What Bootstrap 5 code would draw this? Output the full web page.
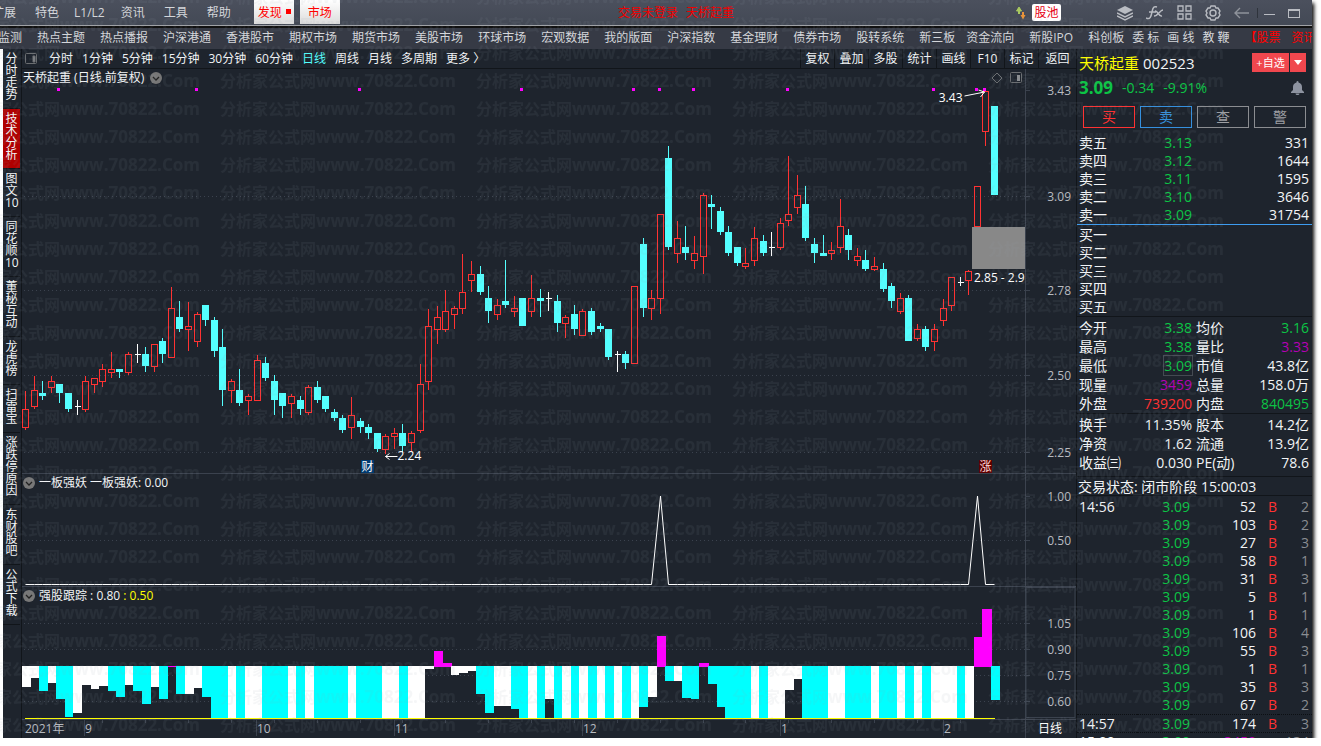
<!DOCTYPE html>
<html lang="zh-CN">
<head>
<meta charset="utf-8">
<meta name="viewport" content="width=device-width, initial-scale=1">
<title>天桥起重 002523</title>
<link href="https://cdn.jsdelivr.net/npm/bootstrap@5.3.0/dist/css/bootstrap.min.css" rel="stylesheet">
<style>
:root{--bg:#1e242d;--line:#11151a;--grid:#3b424e;--up:#ff3232;--down:#54ffff;--green:#0cc445;--mag:#b400b4;--txt:#f2f4f6}
body{font-family:"Open Sans","Noto Sans CJK SC",sans-serif;font-size:12px;line-height:18px;background:#fff;color:var(--txt);overflow:hidden}
button{font:inherit;color:inherit;background:none;border:0;padding:0;white-space:nowrap}
a{color:inherit;text-decoration:none;white-space:nowrap}
.app-win{height:calc(100vh - 8px);margin-right:9px;box-shadow:2px 3px 4px #000}
.menu-bar{height:28px;background:linear-gradient(#4b505d,#434955);border-bottom:2px solid #111;color:#d4d6da;overflow:hidden;box-shadow:inset 0 -1px #a0a2a6}
.menu-left{gap:19px;margin-left:-8px;width:348px}
.menu-left a{padding-top:2px}
.menu-left .lv{margin:0 -3px 0 -4px}
.tab-light{width:40px;height:24px;padding-top:1px;background:linear-gradient(#fff,#dcdcdc);color:#f00;position:relative}
.tab-dot{position:absolute;right:3px;top:9px;width:5px;height:5px;background:#f00}
.notice{color:#f00000}
.pool{background:#fff;color:#e60012;border-radius:2px;width:29px;height:17px;line-height:17px}
.nav-strip{height:21px;padding-bottom:2px;background:#363a45;color:#d4d6da;gap:15px;overflow:hidden}
.nav-strip .set-b{gap:11px}
.nav-first{margin-left:-2px}
.hot{color:#f00}
.work{border-left:3px solid #fff;background:var(--bg);min-height:0}
.side-tabs{width:19px;border-right:1px solid var(--line)}
.side-tabs button{display:block;width:17px;padding:4px 2px 7px;line-height:12px;font-size:12px;border-bottom:1px solid var(--line);white-space:normal;text-align:center}
.side-tabs button.on{background:#b00000}
.period{height:20px;border-bottom:1px solid var(--line)}
.period-list{gap:9px;margin-left:3px}
.period-list .on{color:var(--down)}
.tool-list button{width:34px;height:19px;border-left:1px solid var(--line)}
.tool-list button:last-child{width:38px}
.pane{position:relative;min-height:0;border-bottom:1px solid var(--grid);overflow:hidden}
.pane svg.plot{display:block;width:100%;height:100%}
.pane-a{flex:406 1 0}.pane-b{flex:112 1 0}.pane-c{flex:133 1 0}
.pane-head{position:absolute;left:1px;top:0;gap:4px}
.time-axis{height:18px}
.time-axis svg{display:block;width:100%;height:100%}
svg text{font-family:"Open Sans","Noto Sans CJK SC",sans-serif;font-size:12px}
.quote{width:236px;border-left:1px solid var(--line);overflow:hidden;font-size:14px}
.name-row{height:27px;padding:0 6px 0 2px;font-size:15px}
.name-row h1{font-size:15px;line-height:20px;color:#ff0;margin:0;font-weight:400}
.add-btn{background:#f0474e;color:#fff;font-size:11px;height:19px;width:37px}
.caret-btn{background:#f0474e;height:19px;width:16px;margin-left:1px}
.price-row{height:24px;padding:0 8px 0 2px;color:var(--green);gap:9px}
.price-row strong{font-size:17px}
.trade-row{height:34px;padding:6px 6px 6px 6px;gap:5px}
.trade-row button{flex:1;height:22px;border:1px solid #8b8d91;color:#9c9ea2;line-height:18px}
.trade-row .buy{border-color:var(--up);color:var(--up)}
.trade-row .sell{border-color:#3590de;color:#3590de}
.q-table{width:100%;table-layout:fixed;line-height:18px}
.q-table td,.q-table th{padding:0;font-weight:400;white-space:nowrap;height:18px}
.q-table th{padding-left:2px;text-align:left}
.q-table td{text-align:right;padding-right:1px}
.q-table td:last-child{padding-right:3px}
.stat td,.stat th{height:19px}
.stat td:first-of-type{padding-right:2px}
.asks{border-bottom:1px solid #3d9cf0;margin-bottom:1px}
.rule{border-top:1px solid var(--line);padding-top:1px}
.state{border-top:1px solid var(--line);border-bottom:1px solid var(--line);height:20px;margin-top:4px;padding-left:1px;line-height:19px}
.ticks{padding-top:2px}
.ticks .sep td,.ticks .sep th{border-top:1px dotted #0c0f13;height:17px;line-height:17px}
.g{color:var(--green)}.r{color:var(--up)}.m{color:var(--mag)}.dim{color:#8a8d92}
.boxed{outline:1px solid #444a52}
.wmark{position:absolute;left:0;top:0;width:calc(100% - 72px);height:100%;pointer-events:none}
</style>
</head>
<body>
<div class="app-win d-flex flex-column position-relative">
  <header class="menu-bar d-flex align-items-start flex-shrink-0">
    <nav class="menu-left d-flex align-items-center flex-shrink-0">
      <a href="#">扩展</a><a href="#">特色</a><a href="#" class="lv">L1/L2</a><a href="#">资讯</a><a href="#">工具</a><a href="#">帮助</a>
      <div class="d-flex ms-1" style="gap:6px"><button class="tab-light text-start ps-1">发现<span class="tab-dot"></span></button><button class="tab-light">市场</button></div>
    </nav>
    <div class="notice flex-grow-1 d-flex justify-content-center gap-2 pt-1"><span>交易未登录</span><span>天桥起重</span></div>
    <div class="d-flex align-items-center pt-1" style="width:300px">
      <svg width="16" height="17" viewBox="0 0 16 17"><path d="M7 4v5M7 3L4.500 7h5z" stroke="#a8c860" stroke-width="1" fill="#a8c860"/><path d="M6 7h2v3H6z" fill="#a8c860"/><path d="M10 8h2v4h-2zM8.500 11h5L11 15.500z" fill="#e8943a"/></svg>
      <button class="pool ms-1">股池</button>
      <div class="ms-auto d-flex align-items-center" style="gap:13px">
        <svg width="16" height="16" viewBox="0 0 16 16" fill="#b9bcc2"><path d="M8 1l8 4-8 4-8-4z"/><path d="M0 8l8 4 8-4M0 11l8 4 8-4" fill="none" stroke="#b9bcc2" stroke-width="1.4"/></svg>
        <svg width="18" height="16" viewBox="0 0 18 16" fill="none" stroke="#b9bcc2" stroke-width="1.5"><path d="M0 13c4 2 5-1 6-6s2-6 5-5M3 7h7M9 6c3-1 3 6 7 5M17 5c-3 0-5 6-9 6"/></svg>
        <svg width="15" height="15" viewBox="0 0 15 15" fill="none" stroke="#b9bcc2" stroke-width="1.3"><path d="M1 1h5v5H1zM9 1h5v5H9zM1 9h5v5H1zM9 9h5v5H9z"/></svg>
        <svg width="16" height="16" viewBox="0 0 16 16" fill="none" stroke="#b9bcc2" stroke-width="1.4"><path d="M6 1h4l1 2 2 0 2 3-1 2 1 2-2 3-2 0-1 2H6l-1-2-2 0-2-3 1-2-1-2 2-3 2 0z"/><circle cx="8" cy="8" r="3"/></svg>
        <svg width="15" height="14" viewBox="0 0 15 14" fill="none" stroke="#8f939b" stroke-width="1.4"><path d="M15 7H1M6 2L1 7l5 5"/></svg>
      </div>
      <svg class="ms-2 me-2" width="47" height="14" viewBox="0 0 47 14" fill="none" stroke="#b9bcc2" shape-rendering="crispEdges"><path d="M0.5 2v10" stroke="#2f343c"/><path d="M7 8.500h11M31.500 3.500h11v8h-11zM31 4.500h12"/></svg>
    </div>
  </header>
  <nav class="nav-strip d-flex align-items-center flex-shrink-0" id="strip"></nav>

  <div class="work d-flex flex-grow-1">
    <aside class="side-tabs flex-shrink-0" id="side"></aside>
    <main class="d-flex flex-column flex-grow-1" style="min-width:0">
      <div class="period d-flex align-items-center justify-content-between">
        <div class="period-list d-flex align-items-center">
          <svg width="15" height="12" viewBox="0 0 15 12" fill="none" stroke="#6a6d70"><rect x=".5" y=".5" width="11" height="10" rx="1"/><path d="M8 3v6h2V3z" fill="#8a8d90"/></svg>
          <button>分时</button><button>1分钟</button><button>5分钟</button><button>15分钟</button><button>30分钟</button><button>60分钟</button><button class="on">日线</button><button>周线</button><button>月线</button><button>多周期</button><button>更多 〉</button>
        </div>
        <div class="tool-list d-flex"><button>复权</button><button>叠加</button><button>多股</button><button>统计</button><button>画线</button><button>F10</button><button>标记</button><button>返回</button></div>
      </div>
      <section class="pane pane-a">
        <svg class="plot" id="kline"></svg>
        <div class="pane-head d-flex align-items-center" style="gap:6px"><span>天桥起重 (日线.前复权)</span><svg width="12" height="12" viewBox="0 0 12 12"><circle cx="6" cy="6" r="6" fill="#777"/><path d="M3 5l3 3 3-3" fill="none" stroke="#222" stroke-width="1.3"/></svg></div>
      </section>
      <section class="pane pane-b">
        <svg class="plot" id="spike"></svg>
        <div class="pane-head d-flex align-items-center"><svg width="12" height="12" viewBox="0 0 12 12"><circle cx="6" cy="6" r="6" fill="#777"/><path d="M3 5l3 3 3-3" fill="none" stroke="#222" stroke-width="1.3"/></svg><span>一板强妖 一板强妖: 0.00</span></div>
      </section>
      <section class="pane pane-c">
        <svg class="plot" id="bars"></svg>
        <div class="pane-head d-flex align-items-center"><svg width="12" height="12" viewBox="0 0 12 12"><circle cx="6" cy="6" r="6" fill="#777"/><path d="M3 5l3 3 3-3" fill="none" stroke="#222" stroke-width="1.3"/></svg><span>强股跟踪 : 0.80 <span style="color:#ff0">: 0.50</span></span></div>
      </section>
      <div class="time-axis"><svg id="axis"></svg></div>
    </main>
    <aside class="quote flex-shrink-0">
      <div class="name-row d-flex align-items-center"><h1>天桥起重</h1><span class="ms-1">002523</span><button class="add-btn ms-auto">+自选</button><button class="caret-btn d-flex align-items-center justify-content-center" aria-label="更多"><svg width="8" height="5"><path d="M0 0h8L4 5z" fill="#fff"/></svg></button></div>
      <div class="price-row d-flex align-items-center"><strong>3.09</strong><span>-0.34</span><span>-9.91%</span><svg class="ms-auto" width="13" height="14" viewBox="0 0 13 14" fill="#8d93a0"><path d="M6.500 0c1 0 1 1 1 1.500C10 2 11 4 11 6v3l2 2v1H0v-1l2-2V6c0-2 1-4 3.500-4.500C5.500 1 5.500 0 6.500 0zM4.500 12.500h4c0 2-4 2-4 0z"/></svg></div>
      <div class="trade-row d-flex"><button class="buy">买</button><button class="sell">卖</button><button>查</button><button>警</button></div>
      <div class="asks"><table class="q-table"><tbody id="asks"></tbody></table></div>
      <table class="q-table"><tbody id="bids"></tbody></table>
      <div class="rule"><table class="q-table stat"><colgroup><col style="width:46px"><col style="width:71px"><col style="width:46px"><col></colgroup><tbody>
        <tr><th>今开</th><td class="g">3.38</td><th>均价</th><td class="g">3.16</td></tr>
        <tr><th>最高</th><td class="g">3.38</td><th>量比</th><td class="m">3.33</td></tr>
        <tr><th>最低</th><td class="g"><span class="boxed">3.09</span></td><th>市值</th><td>43.8亿</td></tr>
        <tr><th>现量</th><td class="m">3459</td><th>总量</th><td>158.0万</td></tr>
        <tr><th>外盘</th><td class="r">739200</td><th>内盘</th><td class="g">840495</td></tr>
      </tbody></table></div>
      <div class="rule"><table class="q-table stat"><colgroup><col style="width:46px"><col style="width:71px"><col style="width:46px"><col></colgroup><tbody>
        <tr><th>换手</th><td>11.35%</td><th>股本</th><td>14.2亿</td></tr>
        <tr><th>净资</th><td>1.62</td><th>流通</th><td>13.9亿</td></tr>
        <tr><th>收益㈢</th><td>0.030</td><th>PE(动)</th><td>78.6</td></tr>
      </tbody></table></div>
      <div class="state">交易状态: 闭市阶段 15:00:03</div>
      <div class="ticks"><table class="q-table"><colgroup><col style="width:60px"><col style="width:54px"><col style="width:66px"><col style="width:21px"><col></colgroup><tbody id="ticks"></tbody></table></div>
    </aside>
  </div>
  <svg class="wmark" aria-hidden="true"><defs><pattern id="wm" width="256" height="28" patternUnits="userSpaceOnUse" patternTransform="translate(-36 11)"><text x="0" y="20" fill="#8c96a8" fill-opacity=".09" style="font-size:16px;font-weight:700"><tspan>分析家公式网</tspan><tspan style="font-size:17px">www.70822.Com</tspan></text></pattern></defs><rect width="100%" height="100%" fill="url(#wm)"/></svg>
</div>
<script src="https://cdn.jsdelivr.net/npm/bootstrap@5.3.0/dist/js/bootstrap.bundle.min.js"></script>
<script>
const $=id=>document.getElementById(id);
const link=t=>`<a href="#">${t}</a>`;
$('strip').innerHTML='<a href="#" class="nav-first">监测</a>'+
 '热点主题 热点播报 沪深港通 香港股市 期权市场 期货市场 美股市场 环球市场 宏观数据 我的版面 沪深指数 基金理财 债券市场 股转系统'.split(' ').map(link).join('')+
 '<div class="set-b d-flex">'+['新三板','资金流向'].map(link).join('')+'</div>'+link('新股IPO')+
 '<div class="d-flex gap-2">'+['科创板','委 标','画 线','教 鞭'].map(link).join('')+'</div>'+
 '<div class="set-b d-flex hot">'+link('【股票')+link('资讯')+'</div>';
$('side').innerHTML='分时走势 技术分析 图文10 同花顺10 董秘互动 龙虎榜 扫雷宝 涨跌停原因 东财股吧 公式下载'.split(' ').map((t,i)=>`<button${i==1?' class="on"':''}>${t}</button>`).join('');
const book=(n,p,v)=>`<tr><th>${n}</th><td class="g">${p}</td><td>${v}</td></tr>`;
$('asks').innerHTML=[['卖五','3.13',331],['卖四','3.12',1644],['卖三','3.11',1595],['卖二','3.10',3646],['卖一','3.09',31754]].map(a=>book(...a)).join('');
$('bids').innerHTML='一二三四五'.split('').map(c=>book('买'+c,'','')).join('');
document.querySelectorAll('#asks,#bids').forEach(b=>b.insertAdjacentHTML('beforebegin','<colgroup><col style="width:46px"><col style="width:70px"><col></colgroup>'));
$('ticks').innerHTML=[[52,2],[103,2],[27,3],[58,1],[31,3],[5,1],[1,1],[106,4],[55,3],[1,1],[35,3],[67,2],[174,3],[3459,134]].map(([v,n],i)=>
 `<tr class="${i>11?'sep':''}"><th>${i==0?'14:56':i==12?'14:57':i==13?'15:00':''}</th><td class="g">3.09</td><td class="${i==13?'m':''}">${v}</td><td class="r">${i<13?'B':''}</td><td class="dim">${n}</td></tr>`).join('');

// candles: kind, high, body top, body bottom, low
const K=`r392,410,429,431 r377,391,408,410 c382,394,397,401 r377,382,389,394 c385,385,394,404 c394,394,410,413 w401,407,408,416 r377,382,411,413 r379,379,386,394 r365,370,383,388
r353,370,374,379 c370,370,373,379 r353,355,374,376 w345,355,356,364 c348,355,367,373 r345,345,368,373 c339,342,355,364 r288,309,359,359 c302,318,330,333 r303,327,331,352
r313,315,343,348 c306,306,321,327 c318,321,352,358 c330,348,391,407 r380,382,392,404 c370,391,404,407 r395,397,402,416 r356,361,402,402 c358,364,379,382 c376,382,401,416
c394,394,407,419 r395,397,405,419 c397,401,410,416 r386,388,414,416 c382,388,401,404 c397,397,410,413 c410,413,419,422 c416,419,431,434 r398,416,429,440 c419,422,428,434
c425,428,434,440 c434,434,450,453 r435,437,451,455 r429,434,438,450 c425,434,447,453 r432,434,444,452 r365,385,432,434 r310,327,383,391 r307,318,331,345 r291,312,331,333
r307,309,316,330 r254,293,310,315 r261,275,282,293 c266,275,293,296 c287,299,312,324 r300,306,316,321 c260,302,306,309 r297,309,313,318 c299,299,327,327 r276,299,313,318
c290,299,302,318 w293,299,300,312 c296,302,324,333 r316,318,325,339 c306,315,330,336 r310,312,337,337 c309,312,333,336 c324,327,330,333 c330,330,358,361 w352,355,356,373
c352,355,364,370 r287,287,365,365 c238,244,309,318 r291,299,310,321 r214,214,300,315 c146,158,247,250 r221,238,254,263 c226,247,253,260 r236,253,261,269 r193,195,257,275
c195,204,207,229 c207,211,232,235 c226,232,253,256 c247,247,263,266 r248,263,267,269 r227,238,261,266 c235,241,253,256 w232,247,248,256 r218,223,248,250 r156,214,221,226
r175,195,208,214 c186,204,238,241 c238,244,253,263 c235,253,256,256 r242,250,254,260 r199,226,248,253 c229,235,250,260 r248,256,261,266 c250,260,269,272 r257,266,270,272
c263,269,290,293 c284,287,302,309 r294,299,313,315 c296,299,342,342 r325,330,340,342 c327,330,348,352 r325,330,343,352 r300,309,322,327 r278,278,307,312 w278,283,284,287
r270,272,282,296 r186,186,227,227 r91,91,132,146 c106,106,195,195`.split(/\s+/).map(s=>[s[0],...s.slice(1).split(',').map(Number)]);
// tracking bars: kind and end level (719 = down to the floor)
const B=`w687 w678 c691 w683 c699 c717 w713 w685 w689 w686 c691 c697 w685 c691 c704 w687 c699 m666 c694 w694 w688 c697 c c w c w w c c c w c w c c c c w c c c w w c w w w669 m651 m663 w675 w673 w671 c694 c713 w706 w706 c709 c w c w699 c w c w c w c w c w c707 w697 m636 c681 w681 c698 c699 m663 c684 c707 c c c w c w w w690 w679 c c c w w c c c w c c w c w c w w w c w m637 m609 c700`.split(' ');
const REF=1003, STEP=8.575, GUT=51;
const FILL={r:'#ff3232',c:'#54ffff',w:'#fff'};
function draw(){
 const W=$('kline').clientWidth, sx=(W-GUT)/REF, right=W-GUT;
 const X=v=>Math.round(v*sx), cx=i=>Math.floor((3.6+STEP*i)*sx)+.5;
 const frame=(el,top,ref)=>{const h=el.clientHeight;return v=>Math.round((v-top)*h/(ref-1))};
 const grid=(Y,rows)=>rows.map(([y,t,g])=>(g?`<path d="M2 ${Y(y)+.5}H${right}" stroke="#3b424e" stroke-dasharray="1 3"/>`:'')+`<path d="M${right} ${Y(y)+.5}h5" stroke="#3b424e"/><text x="${W-5}" y="${Y(y)+5}" fill="#b8bbc0" text-anchor="end">${t}</text>`).join('')+`<path d="M${right+.5} 0V999" stroke="#3b424e"/>`;
 let Y=frame($('kline'),69,406), s=grid(Y,[[90,'3.43'],[196,'3.09',1],[291,'2.78',1],[376,'2.50',1],[453,'2.25',1]]);
 s+='<g shape-rendering="crispEdges">';
 K.forEach(([k,h,t,b,l],i)=>{const x=cx(i),f=FILL[k];
  if(k=='w')s+=`<path d="M${x} ${Y(h)}V${Y(l)}M${x-3} ${Y(t)+.5}h6" stroke="#fff"/>`;
  else if(k=='c')s+=`<path d="M${x} ${Y(h)}V${Y(l)}" stroke="${f}"/><rect x="${x-3.5}" y="${Y(t)}" width="7" height="${Math.max(1,Y(b)-Y(t))}" fill="${f}"/>`;
  else s+=`<path d="M${x} ${Y(h)}V${Y(t)}M${x} ${Y(b)}V${Y(l)}M${x-3} ${Y(t)+.5}h6V${Y(b)-.5}h-6z" stroke="${f}" fill="none"/>`;});
 [4,20,39,58,71,74,78,89,106,111,112].forEach(i=>s+=`<rect x="${cx(i)-2.5}" y="${Y(88)}" width="3" height="3" fill="#f0f"/>`);
 s+=`<rect x="${X(950)}" y="${Y(227)}" width="${right-X(950)}" height="${Y(269)-Y(227)}" fill="#888"/></g>`;
 s+=`<svg width="${right}" height="100%"><text x="${X(952)}" y="${Y(283)}" fill="#fff">2.85 - 2.9</text></svg>`;
 s+=`<text x="${cx(112)-23}" y="${Y(102)}" fill="#fff" text-anchor="end">3.43</text><path d="M${cx(112)-21} ${Y(96)}l20-4m-6-2l6 2-4 5" stroke="#fff" fill="none"/>`;
 s+=`<text x="${cx(42)+12}" y="${Y(461)}" fill="#fff">2.24</text><path d="M${cx(42)+12} ${Y(457)+.5}h-12m4-3l-4 3 4 3" stroke="#fff" fill="none"/>`;
 s+=`<rect x="${X(339)}" y="${Y(461)}" width="13" height="13" fill="#003a70"/><text x="${X(339)+.5}" y="${Y(472)}" fill="#fff">财</text>`;
 s+=`<rect x="${X(957)}" y="${Y(461)}" width="13" height="13" fill="#5c0000"/><text x="${X(957)+.5}" y="${Y(472)}" fill="#ffd8d8">涨</text>`;
 s+=`<path d="M${right-28} ${Y(73)}l5 5-5 5-5-5z" stroke="#6a6d70" fill="none"/><rect x="${right-14.5}" y="${Y(73)-.5}" width="11" height="10" rx="1" stroke="#6a6d70" fill="none"/><rect x="${right-8}" y="${Y(75)}" width="3" height="6" fill="#8a8d90"/>`;
 $('kline').innerHTML=s;
 Y=frame($('spike'),475,112);
 $('spike').innerHTML=grid(Y,[[497,'1.00'],[541,'0.50',1]])+`<polyline fill="none" stroke="#fff" points="${K.map((_,i)=>cx(i)+','+((i==74||i==111)?Y(497):Y(585)+.5)).join(' ')}"/>`;
 Y=frame($('bars'),587,133);
 s=grid(Y,[[623,'1.05',1],[649,'0.90',1],[675,'0.75',1],[701,'0.60',1]])+`<g shape-rendering="crispEdges">`;
 B.forEach((b,i)=>{const e=+b.slice(1)||718,x=X(STEP*i),w=X(STEP*(i+1))-x,m=b[0]=='m';
  s+=`<rect x="${x}" y="${m?Y(e):Y(666)}" width="${m?w+1:w}" height="${m?Y(667)-Y(e):Y(e)-Y(666)}" fill="${m?'#f0f':b[0]=='c'?'#0ff':'#fff'}"/>`;});
 $('bars').innerHTML=s+`<rect x="3" y="${Y(718)}" width="${cx(113)-3}" height="1" fill="#ffff00"/></g><rect x="${right+1}" y=".5" width="${GUT-2}" height="${Y(717)}" fill="none" stroke="#3b424e"/>`;
 s=`<path d="M${right+.5} 0V18" stroke="#3b424e"/>`;
 for(let i=4;i<114;i+=5)s+=`<path d="M${cx(i)} 0v3" stroke="#3b424e"/>`;
 [[62,'9'],[234,'10'],[372,'11'],[560,'12'],[758,'1'],[921,'2']].forEach(([x,t])=>s+=`<path d="M${X(x)+.5} 0V16" stroke="#3b424e"/><text x="${X(x)+1}" y="13" fill="#b8bbc0">${t}</text>`);
 $('axis').innerHTML=s+`<text x="3" y="13" fill="#b8bbc0">2021年</text><text x="${right+13}" y="13" fill="#fff">日线</text>`;
}
draw();addEventListener('resize',draw);
</script>
</body>
</html>
